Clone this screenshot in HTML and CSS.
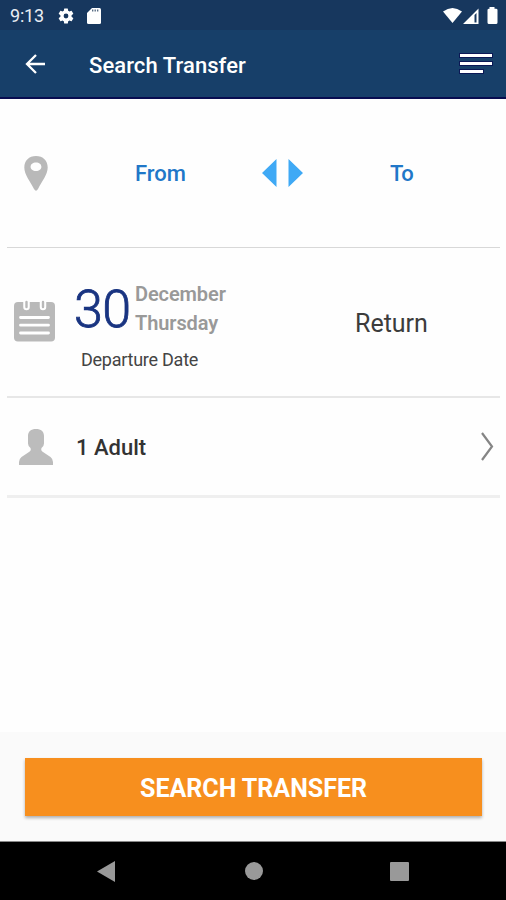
FILE: index.html
```html
<!DOCTYPE html>
<html lang="en">
<head>
<meta charset="utf-8">
<title>Search Transfer</title>
<link rel="stylesheet" href="styles.css">
</head>
<body>
<div class="screen">
  <div class="status">
    <span class="clock">9:13</span>
    <svg class="gear" width="18" height="18" viewBox="0 0 24 24"><path fill="#fff" d="M19.4 13a7.500 7.500 0 0 0 0-2l2.100-1.650a.5.5 0 0 0 .12-.64l-2-3.460a.5.5 0 0 0-.6-.22l-2.500 1a7.300 7.300 0 0 0-1.700-1l-.38-2.650A.49.49 0 0 0 14 2h-4a.49.49 0 0 0-.49.420L9.130 5.070a7.700 7.700 0 0 0-1.690.98l-2.490-1a.5.5 0 0 0-.61.220l-2 3.460a.5.5 0 0 0 .12.640L4.570 11a7.900 7.900 0 0 0 0 2l-2.110 1.650a.5.5 0 0 0-.12.640l2 3.460c.12.220.38.300.61.220l2.490-1c.52.400 1.080.730 1.690.98l.38 2.650c.03.240.24.400.49.400h4c.25 0 .46-.18.490-.42l.38-2.650a7.700 7.700 0 0 0 1.690-.98l2.490 1c.22.090.49 0 .61-.22l2-3.460a.5.5 0 0 0-.12-.64zM12 15.200a3.200 3.200 0 1 1 0-6.400 3.200 3.200 0 0 1 0 6.400z"/></svg>
    <svg class="sd" width="14" height="16" viewBox="0 0 14 16"><path fill="#fff" d="M5 0h7.500Q14 0 14 1.500v13q0 1.500-1.500 1.500h-11Q0 16 0 14.500V5z"/><path stroke="#52677f" stroke-width="1.300" d="M5.700 1.500v2M8.200 1.500v2M10.700 1.500v2"/></svg>
    <svg class="signals" width="56" height="18" viewBox="0 0 56 18"><path fill="#fff" d="M0 4.500Q9.500-2.500 19 4.500L9.500 16z"/><path fill="#fff" fill-rule="evenodd" d="M35.500 1.500V17H20zM31.500 8v7.500h2V6z"/><path fill="#fff" d="M46.500 1.700V0h5v1.700h1.500q1.500 0 1.500 1.300v12.500q0 1.500-1.500 1.500h-7q-1.500 0-1.500-1.500V3q0-1.300 1.500-1.300z"/></svg>
  </div>
  <header class="appbar">
    <svg width="20" height="20" viewBox="0 0 20 20"><path fill="none" stroke="#fff" stroke-width="2.300" d="M20 10H2M11 1L2 10l9 9"/></svg>
    <h1 class="title">Search Transfer</h1>
    <div class="menu"><i></i><i></i><i></i></div>
  </header>
  <main>
    <section class="row route">
      <svg class="pin" width="24" height="35" viewBox="0 0 24 35"><path fill="#b9b9b9" fill-rule="evenodd" d="M12 0C5 0 .3 4.700.3 11.500.3 18.500 6 25 10 33q2 3.500 4 0C18 25 23.700 18.500 23.700 11.500 23.700 4.700 19 0 12 0zm0 6.500c3.200 0 5.400 1.800 5.400 4.300s-2.200 4.200-5.400 4.200-5.400-1.700-5.400-4.200S8.800 6.500 12 6.500z"/></svg>
      <span class="place from">From</span>
      <svg class="swap" width="41" height="28" viewBox="0 0 41 28"><path fill="#3fa9f5" d="M14.500 0v28L0 14zM26.500 0v28L41 14z"/></svg>
      <span class="place to">To</span>
    </section>
    <section class="row dates">
      <svg class="cal" width="41" height="42" viewBox="0 0 41 42"><rect y="2" width="41" height="39.500" rx="4" fill="#b9b9b9"/><path stroke="#fff" stroke-width="6.500" stroke-linecap="round" d="M12.500 0v7M29 0v7"/><path stroke="#b9b9b9" stroke-width="2.400" stroke-linecap="round" d="M12.500 2v5M29 2v5"/><path stroke="#fff" stroke-width="2.800" stroke-linecap="round" d="M6.500 17.500h28M6.500 25.200h28M6.500 33h28"/></svg>
      <div class="departure">
        <div class="date"><span class="day">30</span><div class="names"><span>December</span><span>Thursday</span></div></div>
        <span class="caption">Departure Date</span>
      </div>
      <span class="return">Return</span>
    </section>
    <section class="row guests">
      <svg class="person" width="34" height="36" viewBox="0 0 34 36"><path fill="#bcbcbc" d="M17 0c5 0 8 2.500 8 7v7.500q0 2.500-2.500 4.500-1 2.500 1.500 4l7.500 5q2.500 2 2.500 5v3H0v-3q0-3 2.500-5l7.500-5q2.500-1.500 1.500-4Q9 17 9 14.500V7c0-4.500 3-7 8-7z"/></svg>
      <span class="count">1 Adult</span>
      <svg class="chevron" width="13" height="29" viewBox="0 0 13 29"><path fill="none" stroke="#858585" stroke-width="2.200" d="M1 1l10 13.500L1 28"/></svg>
    </section>
  </main>
  <footer class="action"><button class="search">SEARCH TRANSFER</button></footer>
  <nav class="system">
    <svg width="18" height="21" viewBox="0 0 18 21"><path fill="#999" d="M18 0v21L0 10.500z"/></svg>
    <i class="home"></i>
    <i class="recent"></i>
  </nav>
</div>
</body>
</html>
```
FILE: styles.css
```css
* { box-sizing: border-box; }
body { margin: 0; font-family: Roboto, "Liberation Sans", sans-serif; background: #fff; }
svg { display: block; flex: none; }
.screen { width: 506px; height: 900px; display: flex; flex-direction: column; overflow: hidden; }
.status { height: 30px; flex: none; display: flex; align-items: center; padding: 1px 7px 0 10px; background: #17375e; color: #e9edf3; }
.clock { width: 47px; font-size: 18px; line-height: 30px; letter-spacing: -.2px; }
.sd { margin-left: 12px; }
.signals { margin-left: auto; }
.appbar { height: 69px; flex: none; display: flex; align-items: center; padding: 0 14px 0 25px; background: #173f69; border-bottom: 2px solid #080c50; }
.title { margin: 4px 0 0 44px; font-size: 22px; font-weight: 500; color: #fff; line-height: 28px; letter-spacing: .08px; }
.menu { width: 32px; height: 19px; margin-left: auto; margin-top: -1px; display: flex; flex-direction: column; justify-content: space-between; }
.menu i { height: 3px; background: #fff; box-shadow: 0 0 0 1px #0b1856; }
.menu i:last-child { width: 23px; }
main { flex: 1; padding: 0 6px 0 7px; background: #fefefe; }
.row { display: flex; }
.route { height: 149px; padding-left: 17px; border-bottom: 1px solid #d8d8d8; }
.pin { margin-top: 57px; }
.place { font-size: 22px; font-weight: 500; line-height: 28px; margin-top: 61px; color: #2077c8; }
.from { width: 127px; margin-left: 87px; }
.swap { margin-top: 60px; }
.to { margin-left: 87px; letter-spacing: -.6px; }
.dates { height: 150px; padding-left: 8px; border-bottom: 2px solid #e7e7e7; }
.cal { margin: 52px 0 0 -1px; }
.departure { width: 281px; margin: 32px 0 0 19px; }
.date { display: flex; height: 60px; }
.day { width: 61px; font-size: 52px; line-height: 60px; font-weight: 300; letter-spacing: -.5px; color: #193481; -webkit-text-stroke: .8px #193481; }
.names { display: flex; flex-direction: column; font-size: 20px; line-height: 29px; font-weight: 600; letter-spacing: -.1px; color: #999; }
.caption { display: block; margin: 8px 0 0 7px; font-size: 18px; line-height: 24px; letter-spacing: -.25px; color: #444; }
.return { margin-top: 61px; font-size: 25px; line-height: 30px; color: #3c3c3c; }
.guests { height: 100px; align-items: center; padding: 0 6px 0 12px; border-bottom: 3px solid #efefef; }
.count { margin: 1px 0 0 23px; font-size: 22px; font-weight: 500; color: #333; }
.chevron { margin-left: auto; }
.action { height: 110px; flex: none; padding: 26px 24px 0 25px; background: #fafafa; border-bottom: 1px solid #888; }
.search { display: block; width: 457px; height: 58px; border: 0; padding: 2px 0 0; background: #f78f1e; box-shadow: 0 2px 3px rgba(0,0,0,.3); color: #fff; font: 700 25px Roboto, "Liberation Sans", sans-serif; }
.system { height: 58px; flex: none; display: flex; align-items: center; padding-left: 97px; background: #000; }
.home { width: 18px; height: 18px; margin-left: 130px; border-radius: 50%; background: #999; }
.recent { width: 19px; height: 19px; margin-left: 127px; border-radius: 1px; background: #999; }
```
